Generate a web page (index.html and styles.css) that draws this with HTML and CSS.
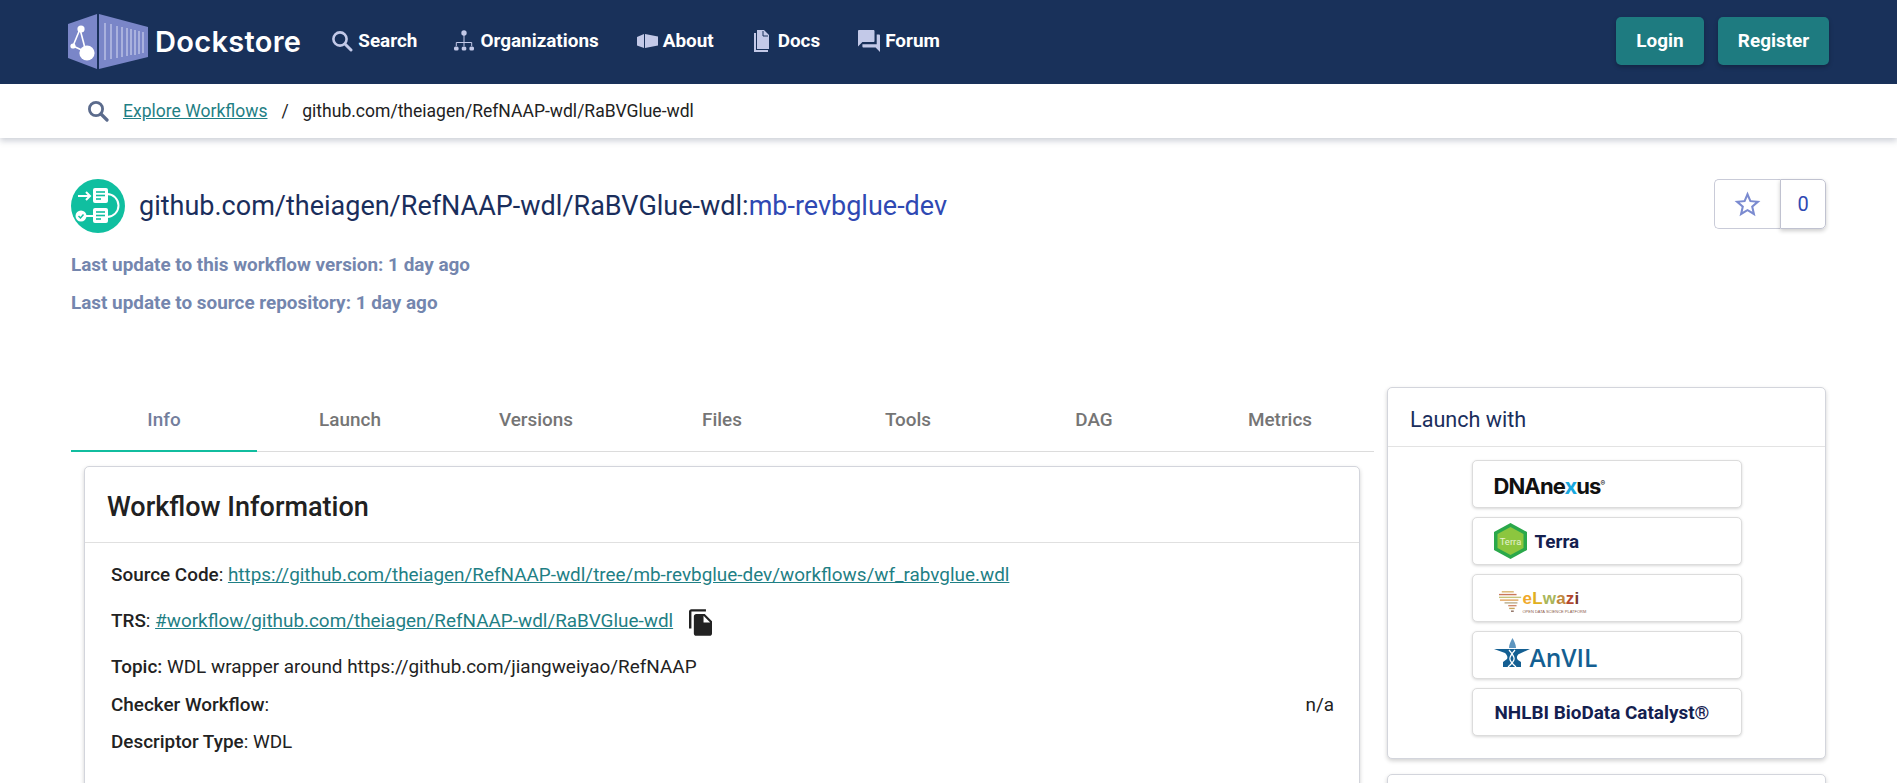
FILE: index.html
```html
<!DOCTYPE html>
<html lang="en">
<head>
<meta charset="utf-8">
<title>Dockstore</title>
<link rel="stylesheet" href="styles.css">
</head>
<body>
<header class="topbar">
  <a class="brand">
    <svg class="brand-mark" viewBox="0 0 80 55" width="80" height="55">
      <polygon points="0,10 29,0 29,55 0,44" fill="#7a86c8"/>
      <polygon points="31,0 80,13 80,43 31,55" fill="#7a86c8"/>
      <g stroke="#c9cfec" stroke-width="1.2">
        <line x1="37" y1="9" x2="37" y2="46"/><line x1="43" y1="10" x2="43" y2="45"/>
        <line x1="49" y1="12" x2="49" y2="44"/><line x1="54" y1="13" x2="54" y2="43"/>
        <line x1="59" y1="14" x2="59" y2="42"/><line x1="63" y1="15" x2="63" y2="41"/>
        <line x1="67" y1="16" x2="67" y2="41"/><line x1="71" y1="17" x2="71" y2="40"/>
        <line x1="75" y1="18" x2="75" y2="39"/>
      </g>
      <g stroke="#fff" stroke-width="1.6"><line x1="12" y1="15" x2="5" y2="32"/><line x1="12" y1="15" x2="18" y2="38"/><line x1="5" y1="32" x2="18" y2="38"/></g>
      <circle cx="13" cy="15" r="3.6" fill="#fff"/><circle cx="5" cy="32" r="2.6" fill="#fff"/><circle cx="19" cy="39" r="7.6" fill="#fff"/>
    </svg>
    <span class="brand-name">Dockstore</span>
  </a>
  <nav class="nav">
    <a class="nav-item nav-search">
      <svg class="nav-icon" viewBox="0 0 22 22" width="22" height="22"><circle cx="9" cy="9" r="6.6" fill="none" stroke="#c3c9e8" stroke-width="2.6"/><line x1="14" y1="14" x2="20" y2="20" stroke="#c3c9e8" stroke-width="3" stroke-linecap="round"/></svg>
      <span>Search</span>
    </a>
    <a class="nav-item nav-orgs">
      <svg class="nav-icon" viewBox="0 0 22 22" width="22" height="22"><g fill="#c3c9e8"><circle cx="11" cy="3" r="2.7"/><rect x="1" y="16.5" width="4.6" height="4" rx="1.6"/><rect x="8.7" y="16.5" width="4.6" height="4" rx="1.6"/><rect x="16.4" y="16.5" width="4.6" height="4" rx="1.6"/></g><path d="M11 5v11M3.3 16v-3.5h15.4V16" fill="none" stroke="#c3c9e8" stroke-width="1"/></svg>
      <span>Organizations</span>
    </a>
    <a class="nav-item nav-about">
      <svg class="nav-icon" viewBox="0 0 22 16" width="22" height="16"><polygon points="0,4 7,1 7,15 0,12.5" fill="#c3c9e8"/><polygon points="8,1 21,3.5 21,12.5 8,15" fill="#c3c9e8"/></svg>
      <span>About</span>
    </a>
    <a class="nav-item nav-docs">
      <svg class="nav-icon" viewBox="0 0 16 22" width="16" height="22"><path d="M0 3h2v17h12v2H0z" fill="#c3c9e8"/><path d="M3 0h7l5 5v14H3z" fill="#c3c9e8"/><path d="M9 1v5h5" fill="none" stroke="#19315a" stroke-width="1"/></svg>
      <span>Docs</span>
    </a>
    <a class="nav-item nav-forum">
      <svg class="nav-icon" viewBox="2 2 20 20" width="22" height="22"><path fill="#c3c9e8" d="M21 6h-2v9H6v2c0 .55.45 1 1 1h11l4 4V7c0-.55-.45-1-1-1zm-4 6V3c0-.55-.45-1-1-1H3c-.55 0-1 .45-1 1v14l4-4h10c.55 0 1-.45 1-1z"/></svg>
      <span>Forum</span>
    </a>
  </nav>
  <div class="auth">
    <a class="auth-btn auth-login">Login</a>
    <a class="auth-btn auth-register">Register</a>
  </div>
</header>

<div class="crumbs">
  <svg class="crumb-icon" viewBox="0 0 22 22" width="22" height="22"><circle cx="9" cy="9" r="6.6" fill="none" stroke="#5b6b8c" stroke-width="2.8"/><line x1="14" y1="14" x2="20" y2="20" stroke="#5b6b8c" stroke-width="3.2" stroke-linecap="round"/></svg>
  <a class="crumb-link">Explore Workflows</a>
  <span class="crumb-sep">/</span>
  <span class="crumb-current">github.com/theiagen/RefNAAP-wdl/RaBVGlue-wdl</span>
</div>

<main class="page">
  <section class="summary">
    <div class="title-row">
      <div class="title-main">
        <svg class="wf-icon" viewBox="0 0 54 54" width="54" height="54">
          <circle cx="27" cy="27" r="27" fill="#10bfa0"/>
          <path d="M36 15a11.5 11.5 0 0 1 0 23" fill="none" stroke="#fff" stroke-width="2"/>
          <rect x="22" y="9" width="15" height="15" rx="2" fill="#fff"/>
          <rect x="22" y="29" width="15" height="15" rx="2" fill="#fff"/>
          <g stroke="#10bfa0" stroke-width="1.6"><line x1="25" y1="13" x2="34" y2="13"/><line x1="25" y1="16.5" x2="34" y2="16.5"/><line x1="25" y1="20" x2="30" y2="20"/><line x1="25" y1="33" x2="34" y2="33"/><line x1="25" y1="36.500" x2="34" y2="36.500"/><line x1="25" y1="40" x2="30" y2="40"/></g>
          <path d="M7 17h12M15 13l4 4-4 4" fill="none" stroke="#fff" stroke-width="2"/>
          <circle cx="10" cy="37" r="5.500" fill="#fff"/>
          <path d="M7.500 37l2 2 3-3.500" fill="none" stroke="#10bfa0" stroke-width="1.500"/>
          <line x1="15" y1="37" x2="22" y2="37" stroke="#fff" stroke-width="2"/>
        </svg>
        <h1 class="title">github.com/theiagen/RefNAAP-wdl/RaBVGlue-wdl:<span class="title-version">mb-revbglue-dev</span></h1>
      </div>
      <div class="star-group">
        <button class="star-btn"><svg viewBox="0 0 24 24" width="31" height="31"><path fill="#7b8bd0" d="M22 9.240l-7.190-.620L12 2 9.190 8.630 2 9.240l5.460 4.730L5.820 21 12 17.270 18.180 21l-1.630-7.030L22 9.240zM12 15.400l-3.760 2.270 1-4.280-3.320-2.880 4.380-.380L12 6.100l1.710 4.040 4.380.380-3.320 2.880 1 4.280L12 15.400z"/></svg></button>
        <span class="star-count">0</span>
      </div>
    </div>
    <p class="updated updated-first">Last update to this workflow version: 1 day ago</p>
    <p class="updated">Last update to source repository: 1 day ago</p>
  </section>

  <div class="columns">
    <div class="col-main">
      <div class="tabs">
        <a class="tab tab-active">Info</a>
        <a class="tab">Launch</a>
        <a class="tab">Versions</a>
        <a class="tab">Files</a>
        <a class="tab">Tools</a>
        <a class="tab">DAG</a>
        <a class="tab">Metrics</a>
      </div>
      <article class="card info-card">
        <h2 class="info-title">Workflow Information</h2>
        <div class="info-body">
          <p class="info-row row-source"><b>Source Code</b>: <a class="link">https://github.com/theiagen/RefNAAP-wdl/tree/mb-revbglue-dev/workflows/wf_rabvglue.wdl</a></p>
          <p class="info-row row-trs"><span><b>TRS</b>: <a class="link">#workflow/github.com/theiagen/RefNAAP-wdl/RaBVGlue-wdl</a></span>
            <svg class="copy-icon" viewBox="2 1 19 22" width="23" height="27"><path fill="#222" d="M16 1H4c-1.100 0-2 .9-2 2v14h2V3h12V1zm-1 4l6 6v10c0 1.100-.9 2-2 2H7.990C6.890 23 6 22.100 6 21l.01-14c0-1.100.89-2 1.990-2h7zm-1 7h5.500L14 6.500V12z"/></svg>
          </p>
          <p class="info-row row-topic"><b>Topic:</b> WDL wrapper around https://github.com/jiangweiyao/RefNAAP</p>
          <p class="info-row row-checker"><span><b>Checker Workflow</b>:</span><span>n/a</span></p>
          <p class="info-row row-desc"><b>Descriptor Type</b>: WDL</p>
        </div>
      </article>
    </div>

    <aside class="col-side">
      <section class="card launch-card">
        <h3 class="launch-title">Launch with</h3>
        <div class="launch-list">
          <a class="launch-btn"><span class="logo-dna">DNAne<span class="logo-dna-x">x</span>us<sup class="logo-dna-tm">®</sup></span></a>
          <a class="launch-btn">
            <svg class="terra-mark" viewBox="0 0 33 36" width="33" height="36"><polygon points="16.500,0 33,9 33,27 16.500,36 0,27 0,9" fill="#2aa84a"/><polygon points="16.500,4 29.500,11 29.500,25 16.500,32 3.500,25 3.500,11" fill="#8cc63f"/><text x="16.500" y="22" class="terra-mark-text" text-anchor="middle">Terra</text></svg>
            <span class="logo-terra">Terra</span>
          </a>
          <a class="launch-btn">
            <span class="elwazi">
              <svg viewBox="0 0 26 25" width="24" height="25"><g stroke-width="1.500"><line x1="3" y1="2" x2="16" y2="2" stroke="#d9b36c"/><line x1="0" y1="5" x2="19" y2="5" stroke="#c9775a"/><line x1="0" y1="8" x2="24" y2="8" stroke="#c7c47c"/><line x1="1" y1="11" x2="21" y2="11" stroke="#e0a35c"/><line x1="6" y1="14" x2="20" y2="14" stroke="#b9ad8c"/><line x1="10" y1="17" x2="19" y2="17" stroke="#d08a6c"/><line x1="11" y1="20" x2="17" y2="20" stroke="#c7a65c"/><line x1="13" y1="23" x2="16" y2="23" stroke="#8a6a5c"/></g></svg>
              <span class="elwazi-text">
                <span class="elwazi-name"><span class="ew-e">e</span><span class="ew-l">L</span><span class="ew-w">w</span><span class="ew-a">a</span><span class="ew-z">z</span><span class="ew-i">i</span></span>
                <span class="elwazi-sub">OPEN DATA SCIENCE PLATFORM</span>
              </span>
            </span>
          </a>
          <a class="launch-btn">
            <svg class="anvil-mark" viewBox="0 0 36 29" width="36" height="29"><path fill="#145f92" d="M0 11h36l-11 5c-2 1-3 4-1 6l3 2v5H9v-5l4-3c1-2 0-4-2-6z"/><path d="M14 29C22 22 22 20 15 12M22 29C14 22 14 20 21 12" fill="none" stroke="#fff" stroke-width="1.200"/><path d="M15 10c0-4 2-7 3.500-10 1.500 3 3.500 6 3.500 10z" fill="#5f96bf"/></svg>
            <span class="logo-anvil">AnVIL</span>
          </a>
          <a class="launch-btn"><span class="logo-bdc">NHLBI BioData Catalyst®</span></a>
        </div>
      </section>
      <section class="card next-card"></section>
    </aside>
  </div>
</main>
</body>
</html>
```
FILE: styles.css
```css
* { box-sizing: border-box; }
html, body { margin: 0; padding: 0; height: 783px; overflow: hidden; background: #fff; }
body { font-family: Roboto, "Liberation Sans", sans-serif; color: #222; font-size: 18.9px; }
p, h1, h2, h3 { margin: 0; font-weight: 400; }

.topbar { height: 84px; background: #19315a; display: flex; align-items: center; padding-left: 68px; padding-right: 68px; }
.brand { display: flex; align-items: center; margin-top: -1px; }
.brand-mark { display: block; }
.brand-name { font-family: Inter, sans-serif; font-weight: 600; font-size: 29px; color: #fff; margin-left: 7px; letter-spacing: 0.3px; }
.nav { display: flex; align-items: center; margin-left: 30px; margin-top: -3px; }
.nav-item { display: flex; align-items: center; color: #fff; font-weight: 700; font-size: 18.9px; }
.nav-icon { display: block; margin-right: 5px; }
.nav-orgs { margin-left: 36px; }
.nav-about { margin-left: 38px; }
.nav-about .nav-icon { margin-right: 4px; }
.nav-docs { margin-left: 40px; }
.nav-docs .nav-icon { margin-right: 8px; }
.nav-forum { margin-left: 38px; }
.auth { margin-left: auto; display: flex; gap: 14px; margin-top: -3px; }
.auth-btn { height: 48px; display: flex; align-items: center; justify-content: center; background: #1e7b80; color: #fff; font-weight: 700; font-size: 18.9px; border-radius: 5px; box-shadow: 0 2px 4px rgba(0,0,0,.25); }
.auth-login { width: 88px; }
.auth-register { width: 111px; }

.crumbs { height: 54px; display: flex; align-items: center; padding-left: 87px; background: #fff; box-shadow: 0 3px 6px rgba(60,70,100,.25); position: relative; font-size: 17.55px; }
.crumb-icon { display: block; }
.crumb-link { margin-left: 14px; color: #1f7f85; text-decoration: underline; }
.crumb-sep { margin-left: 14px; color: #222; }
.crumb-current { margin-left: 13.5px; color: #222; }

.page { padding: 41px 71px 0 71px; }
.title-row { display: flex; justify-content: space-between; align-items: flex-start; }
.title-main { display: flex; align-items: center; }
.wf-icon { display: block; }
.title { margin-left: 14px; font-size: 27px; color: #1a2e5c; }
.title-version { color: #2f49b3; }
.star-group { display: flex; height: 50px; }
.star-btn { width: 66px; height: 50px; padding: 0; display: flex; align-items: center; justify-content: center; background: #fff; border: 1px solid #c9cbd8; border-right: 0; border-radius: 5px 0 0 5px; }
.star-count { width: 46px; display: flex; align-items: center; justify-content: center; font-size: 20px; color: #2f49b3; border: 1px solid #c0c2d0; border-radius: 0 5px 5px 0; box-shadow: 0 2px 4px rgba(0,0,0,.2); }
.updated { color: #7486ae; font-weight: 700; font-size: 18.9px; margin-top: 17px; line-height: 21px; }
.updated-first { margin-top: 21px; }

.columns { display: flex; margin-top: 74px; gap: 13px; align-items: flex-start; }
.col-main { width: 1303px; flex: none; }
.col-side { width: 439px; flex: none; }
.tabs { display: flex; height: 65px; border-bottom: 1px solid #dcdcdc; }
.tab { width: 186px; display: flex; align-items: center; justify-content: center; color: #757575; font-weight: 500; font-size: 18.9px; }
.tab-active { color: #737e9c; border-bottom: 2px solid #11bd9f; height: 65px; padding-top: 2px; }
.card { background: #fff; border: 1px solid #d3d5dc; border-radius: 5px; box-shadow: 0 2px 4px rgba(0,0,0,.18); }
.info-card { margin: 14px 14px 0 13px; height: 400px; }
.info-title { height: 76px; display: flex; align-items: center; padding: 4px 0 0 22px; font-size: 27px; font-weight: 500; color: #212121; border-bottom: 1px solid #e0e0e0; }
.info-body { padding: 0 25px 0 26px; }
.info-row { line-height: 22px; font-size: 18.9px; }
.info-row b { font-weight: 500; }
.link { color: #1f7f85; text-decoration: underline; }
.row-source { margin-top: 21px; }
.row-trs { margin-top: 24px; display: flex; align-items: center; height: 22px; }
.copy-icon { margin-left: 16px; margin-top: 3px; display: block; }
.row-topic { margin-top: 24px; }
.row-checker { margin-top: 16px; display: flex; justify-content: space-between; }
.row-desc { margin-top: 15px; }

.launch-card { height: 372px; }
.launch-title { height: 59px; display: flex; align-items: center; padding: 4px 0 0 22px; font-size: 21.6px; color: #1a2e5c; border-bottom: 1px solid #e3e3e3; }
.launch-list { display: flex; flex-direction: column; align-items: center; gap: 9px; padding-top: 13px; }
.launch-btn { width: 270px; height: 48px; display: flex; align-items: center; padding-left: 21px; background: #fff; border: 1px solid #dcdcdc; border-radius: 5px; box-shadow: 0 1px 3px rgba(0,0,0,.16); }
.next-card { height: 60px; margin-top: 15px; }

.logo-dna { font-family: Inter, sans-serif; font-weight: 700; font-size: 22px; color: #111; letter-spacing: -0.9px; margin-top: 3px; }
.logo-dna-x { color: #19a9e0; }
.logo-dna-tm { font-size: 7px; vertical-align: 8px; line-height: 0; }
.terra-mark { display: block; }
.terra-mark-text { font-family: Roboto, sans-serif; font-size: 9.5px; fill: #e6f2d0; }
.logo-terra { margin-left: 8px; font-weight: 700; font-size: 18.9px; color: #14204f; }
.elwazi { display: flex; align-items: center; margin-left: 5px; margin-top: 6px; }
.elwazi-text { display: flex; flex-direction: column; }
.elwazi-name { font-family: "Liberation Sans", sans-serif; font-size: 17px; font-weight: 700; line-height: 20px; letter-spacing: 0.2px; }
.ew-e { color: #f0a92b; }
.ew-l { color: #e0b020; }
.ew-w { color: #a9b65a; }
.ew-a { color: #c0883c; }
.ew-z { color: #b5482f; }
.ew-i { color: #7a3b2c; }
.elwazi-sub { font-family: "Liberation Sans", sans-serif; font-size: 4px; line-height: 5px; color: #8a5a4a; white-space: nowrap; }
.anvil-mark { display: block; margin-top: -5px; }
.logo-anvil { font-family: "Open Sans", sans-serif; font-weight: 600; font-size: 24.5px; color: #145f92; margin-top: 6px; line-height: 1; }
.logo-bdc { font-weight: 700; font-size: 18.9px; color: #14204f; margin-left: 1px; }
```
